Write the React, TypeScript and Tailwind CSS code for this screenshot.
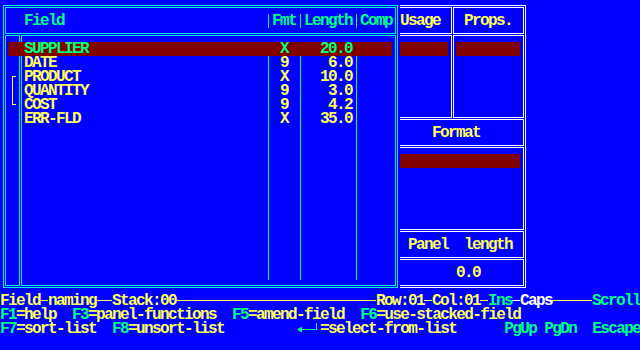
const fields = [
  { name: "DATE", fmt: "9", len: "6.0" },
  { name: "PRODUCT", fmt: "X", len: "10.0" },
  { name: "QUANTITY", fmt: "9", len: "3.0" },
  { name: "COST", fmt: "9", len: "4.2" },
  { name: "ERR-FLD", fmt: "X", len: "35.0" },
];

function Key({ k, label }: { k: string; label: string }) {
  return (
    <span>
      <span className="text-[#00ff7f]">{k}</span>
      {label}
    </span>
  );
}

export default function App() {
  return (
    <div className="w-[640px] h-[350px] overflow-hidden bg-[#0000ff] font-['Liberation_Mono','DejaVu_Sans_Mono',monospace] text-[16px] font-bold leading-[14px] tracking-[-1.6px] text-[#ffff55]">
      <div className="flex h-[294px] pt-[5px] pl-[3px]">
        {/* field list panel */}
        <div className="w-[395px] h-[283px] border border-[#00f0d8] p-px flex flex-col gap-px">
          <div className="h-[27px] border border-[#00f0d8] pt-[6px]">
            <div className="flex h-[14px] text-[#00ff7f]">
              <div className="w-[262px] pl-[18px]">Field</div>
              <div className="w-[32px] border-l border-[#00ff7f] pl-[3px]">Fmt</div>
              <div className="w-[56px] border-l border-[#00ff7f] pl-[3px]">Length</div>
              <div className="flex-1 border-l border-[#00ff7f] pl-[3px]">Comp</div>
            </div>
          </div>
          <div className="flex-1 flex gap-px">
            <div className="w-[15px] border border-[#00f0d8] pt-[40px] pl-[6px]">
              <div className="w-[4px] h-[29px] border-l border-y border-[#ffff55]" />
            </div>
            <div className="flex-1 border border-[#00f0d8] pt-[6px]">
              {/* selected row */}
              <div className="flex h-[14px] ml-[-14px] w-[384px] bg-[#800000] text-[#00ff7f]">
                <div className="w-[260px] pl-[16px]">SUPPLIER</div>
                <div className="w-[32px] pl-[12px]">X</div>
                <div className="w-[56px] pr-[4px] text-right">20.0</div>
                <div className="flex-1" />
              </div>
              <div className="flex h-[224px]">
                <div className="w-[246px] pl-[2px]">
                  {fields.map((f) => (
                    <div key={f.name} className="h-[14px]">{f.name}</div>
                  ))}
                </div>
                <div className="w-[32px] border-l border-[#00ff7f] pl-[11px]">
                  {fields.map((f) => (
                    <div key={f.name} className="h-[14px]">{f.fmt}</div>
                  ))}
                </div>
                <div className="w-[56px] border-l border-[#00ff7f] pr-[4px] text-right">
                  {fields.map((f) => (
                    <div key={f.name} className="h-[14px]">{f.len}</div>
                  ))}
                </div>
                <div className="flex-1 border-l border-[#00ff7f]" />
              </div>
            </div>
          </div>
        </div>

        {/* properties panel */}
        <div className="ml-[2px] w-[126px] h-[283px] border-y border-r border-white pt-px pr-px pb-px flex flex-col gap-px">
          <div className="flex gap-px h-[111px]">
            <div className="w-[52px] flex flex-col gap-px">
              <div className="h-[27px] border-y border-r border-white pt-[6px]">Usage</div>
              <div className="flex-1 border-y border-r border-white pt-[6px]">
                <div className="w-[48px] h-[14px] bg-[#800000]" />
              </div>
            </div>
            <div className="flex-1 flex flex-col gap-px">
              <div className="h-[27px] border border-white pt-[6px] pl-[10px]">Props.</div>
              <div className="flex-1 border border-white pt-[6px] pl-[2px]">
                <div className="w-[64px] h-[14px] bg-[#800000]" />
              </div>
            </div>
          </div>
          <div className="h-[27px] border-y border-r border-white pt-[6px] pl-[32px]">Format</div>
          <div className="h-[83px] border-y border-r border-white pt-[6px]">
            <div className="w-[120px] h-[14px] bg-[#800000]" />
          </div>
          <div className="h-[27px] border-y border-r border-white pt-[6px] pl-[8px] whitespace-pre">Panel  length</div>
          <div className="h-[27px] border-y border-r border-white pt-[6px] pl-[56px]">0.0</div>
        </div>
      </div>

      {/* status line */}
      <div className="flex h-[14px]">
        <span>Field</span>
        <div className="w-[8px] h-px mt-[6px] bg-[#ffff55]" />
        <span>naming</span>
        <div className="w-[16px] h-px mt-[6px] bg-[#ffff55]" />
        <span>Stack:00</span>
        <div className="w-[200px] h-px mt-[6px] bg-[#ffff55]" />
        <span>Row:01</span>
        <div className="w-[8px] h-px mt-[6px] bg-[#ffff55]" />
        <span>Col:01</span>
        <div className="w-[8px] h-px mt-[6px] bg-[#ffff55]" />
        <span className="text-[#00ff7f]">Ins</span>
        <div className="w-[8px] h-px mt-[6px] bg-white" />
        <span className="text-white">Caps</span>
        <div className="w-[40px] h-px mt-[6px] bg-[#ffff55]" />
        <span className="text-[#00ff7f]">Scroll</span>
      </div>

      {/* function keys */}
      <div className="h-[14px] whitespace-pre">
        <Key k="F1" label="=help  " />
        <Key k="F3" label="=panel-functions  " />
        <Key k="F5" label="=amend-field  " />
        <Key k="F6" label="=use-stacked-field" />
      </div>
      <div className="flex h-[14px] whitespace-pre">
        <Key k="F7" label="=sort-list  " />
        <Key k="F8" label="=unsort-list" />
        <span>{"         "}</span>
        <svg width="24" height="14" viewBox="0 0 24 14" className="shrink-0">
          <polygon points="1,7.5 6,4.5 6,10.5" fill="#00ff7f" />
          <rect x="6" y="7" width="15" height="1" fill="#00ff7f" />
          <rect x="20" y="1" width="1" height="7" fill="#00ff7f" />
        </svg>
        <span>=select-from-list      </span>
        <span className="text-[#00ff7f]">PgUp PgDn  Escape</span>
      </div>
    </div>
  );
}
